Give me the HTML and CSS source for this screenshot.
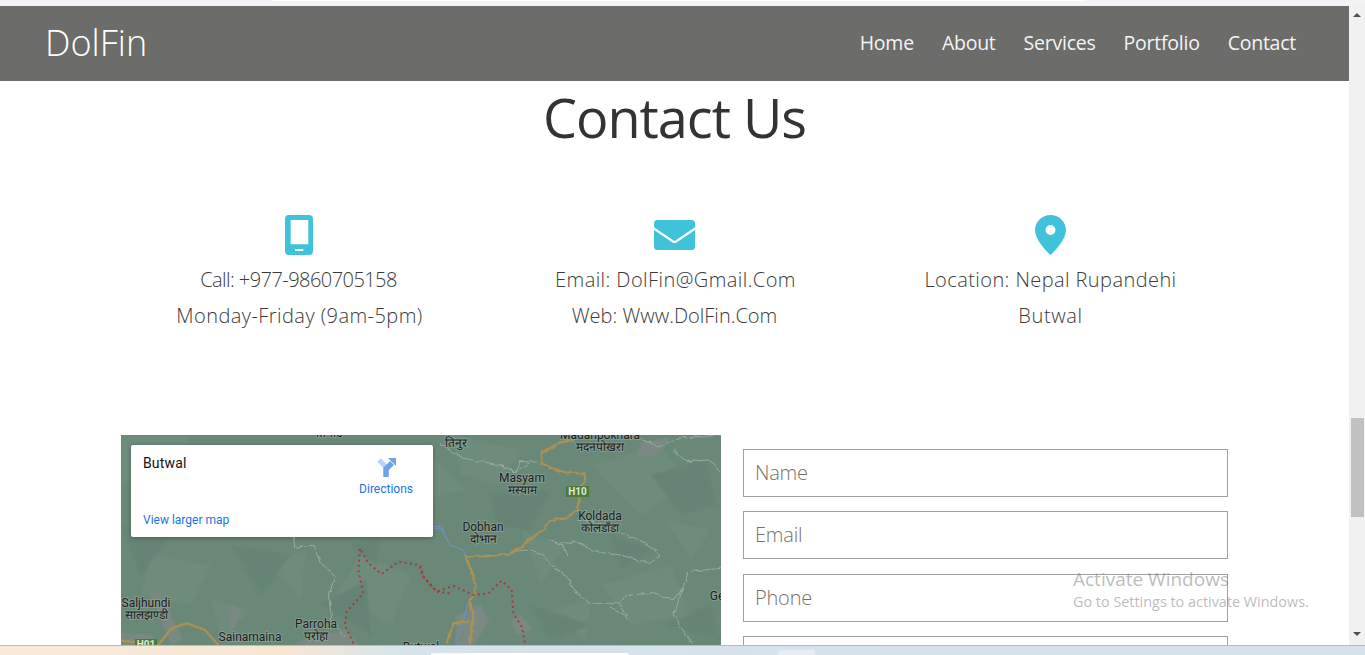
FILE: index.html
```html
<!DOCTYPE html>
<html lang="en">
<head>
<meta charset="utf-8">
<title>DolFin - Contact</title>
<link rel="stylesheet" href="styles.css">
</head>
<body>
<div class="window">
  <div class="top-strip"><div class="top-strip-tab"></div></div>
  <div class="viewport">
    <div class="page">
      <header class="navbar">
        <a class="brand">DolFin</a>
        <nav class="nav">
          <a>Home</a><a>About</a><a>Services</a><a>Portfolio</a><a>Contact</a>
        </nav>
      </header>
      <h1 class="title">Contact Us</h1>
      <section class="info">
        <div class="info-col">
          <svg class="icon icon-phone" width="28" height="40" viewBox="0 0 28 40"><path fill="#3fc2da" fill-rule="evenodd" d="M4 0h20a4 4 0 0 1 4 4v32a4 4 0 0 1-4 4H4a4 4 0 0 1-4-4V4a4 4 0 0 1 4-4zM5.700 5v24.300h17.600V5zM10 34v2h8.300v-2z"/></svg>
          <p class="tight">Call: +977-9860705158</p>
          <p class="wide">Monday-Friday (9am-5pm)</p>
        </div>
        <div class="info-col">
          <svg class="icon icon-mail" width="41" height="30" viewBox="0 0 41 30"><rect width="41" height="30" rx="3.500" fill="#3fc2da"/><path d="M-1 8 19 21.500q1.500.8 3 0L42 8" fill="none" stroke="#fff" stroke-width="2.200"/></svg>
          <p class="loose">Email: DolFin@Gmail.Com</p>
          <p>Web: Www.DolFin.Com</p>
        </div>
        <div class="info-col">
          <svg class="icon icon-pin" width="31" height="40" viewBox="0 0 31 40"><path fill="#3fc2da" fill-rule="evenodd" d="M15.500 0C6.900 0 0 6.800 0 15.200 0 24 10.500 35.500 15.500 40 20.500 35.500 31 24 31 15.200 31 6.800 24.100 0 15.500 0zm0 10a5 5 0 1 1 0 10 5 5 0 0 1 0-10z"/></svg>
          <p class="loose">Location: Nepal Rupandehi</p>
          <p class="loose-more">Butwal</p>
        </div>
      </section>
      <section class="contact">
        <div class="map">
          <svg class="map-art" width="600" height="450" viewBox="0 0 600 450">
            <defs>
              <filter id="wobble" filterUnits="userSpaceOnUse" x="-100" y="-100" width="1300" height="900">
                <feTurbulence type="fractalNoise" baseFrequency=".05" numOctaves="2" seed="4" result="noise"/>
                <feDisplacementMap in="SourceGraphic" in2="noise" scale="14" xChannelSelector="R" yChannelSelector="G"/>
                <feGaussianBlur stdDeviation=".6"/>
              </filter>
              <filter id="soft" x="-5%" y="-5%" width="110%" height="110%">
                <feGaussianBlur stdDeviation="1.200"/>
              </filter>
            </defs>
            <rect width="600" height="450" fill="#698877"/>
            <g filter="url(#soft)">
              <g fill="#6d8c7b">
                <polygon points="0,0 70,0 50,30 0,50"/>
                <polygon points="330,0 400,15 380,50 340,40"/>
                <polygon points="470,30 540,10 570,50 520,80"/>
                <polygon points="30,120 90,130 70,170 20,160"/>
                <polygon points="240,120 290,140 270,190 215,160"/>
                <polygon points="480,150 550,130 570,180 510,190"/>
                <polygon points="400,95 445,110 420,150"/>
                <polygon points="150,130 185,115 180,165"/>
                <polygon points="310,20 345,55 300,65"/>
                <polygon points="545,85 590,95 570,125"/>
                <polygon points="90,165 130,175 100,205"/>
                <polygon points="430,175 470,165 465,205"/>
              </g>
              <g fill="#658474">
                <polygon points="110,110 170,120 140,160"/>
                <polygon points="370,60 430,55 410,95 375,90"/>
                <polygon points="275,30 305,55 285,85 260,65"/>
                <polygon points="410,170 470,190 430,205"/>
                <polygon points="530,40 585,25 595,70 560,80"/>
                <polygon points="200,170 245,145 250,200"/>
                <polygon points="0,90 50,100 20,140"/>
                <polygon points="490,100 530,115 500,135"/>
                <polygon points="230,110 260,100 255,130"/>
                <polygon points="545,190 590,170 600,205"/>
              </g>
              <g fill="#7a8a83">
                <polygon points="28,155 40,160 62,205 50,210 38,180"/>
                <polygon points="110,170 120,175 108,205"/>
                <polygon points="335,180 360,170 368,185 352,212 335,212"/>
                <polygon points="390,185 400,180 412,195 395,200"/>
                <polygon points="180,205 225,195 240,212 170,212"/>
                <polygon points="520,8 550,2 535,20 515,20"/>
                <polygon points="0,198 30,200 40,212 0,212"/>
              </g>
            </g>
            <g transform="translate(299 -5) scale(.3333)" fill="none">
              <path filter="url(#wobble)" stroke="#9aaca2" stroke-width="3" d="M280 365C330 355 360 360 390 400L440 440 470 490 510 520 600 520 620 495 700 490 760 510 790 470 805 425 900 415M385 330 430 345 445 380M430 340 470 335 520 365 600 375 690 400 720 378 690 345 610 310 570 285 470 270M600 520 625 565 570 530M790 470 760 555 815 640M760 60 800 95 870 90 903 130M640 20 720 50 770 25 903 15M60 40 130 85 240 105 285 125 300 95 350 95M285 125 330 100"/>
              <path stroke="#6e8fb8" stroke-width="4" d="M0 290 60 290 90 345 130 360 135 378M145 515 125 590 105 640"/>
              <path filter="url(#wobble)" stroke="#ab9152" stroke-width="7" d="M460 30 420 38 365 68 365 100 410 120 440 128 490 130 498 150 480 170 478 210 470 240 440 265 390 270 375 295 330 330 295 355 270 370 200 378 135 378 150 410 165 450 165 490 150 510 160 570 150 640M150 575 100 580 80 640"/>
              <path stroke="#a33b3c" stroke-width="6" stroke-dasharray="6 10" d="M0 410 10 440 50 485 100 468 160 495 205 490 245 452 275 480 280 550 305 590 315 640"/>
            </g>
            <g transform="translate(-6 -5) scale(.3333)" fill="none">
              <path filter="url(#wobble)" stroke="#9aaca2" stroke-width="3" d="M535 320 540 352 600 345 615 395 660 440 640 490 650 570 690 620"/>
              <path stroke="#ab9152" stroke-width="7" d="M18 632 90 640 130 645 170 595 215 580 270 600 310 645"/>
              <path stroke="#a33b3c" stroke-width="6" stroke-dasharray="6 10" d="M715 640 690 585 695 545 745 490 730 420 735 355 760 400 800 432 850 395 915 405 925 440 965 485 1005 490"/>
              <path stroke="#6e8fb8" stroke-width="3" d="M955 295 985 295 990 320"/>
            </g>
            <rect class="shield" x="445" y="51" width="23" height="11"/>
            <text class="shield-text" x="456.500" y="60">H10</text>
            <rect class="shield" x="14" y="204" width="22" height="11"/>
            <text class="shield-text" x="25" y="213">H01</text>
            <text class="map-label" x="479" y="4">Madanpokhara</text>
            <text class="map-label" x="479" y="16">मदनपोखरा</text>
            <text class="map-label" x="401" y="47">Masyam</text>
            <text class="map-label" x="401" y="59">मस्याम</text>
            <text class="map-label" x="479" y="85">Koldada</text>
            <text class="map-label" x="479" y="97">कोलडाँडा</text>
            <text class="map-label" x="362" y="96">Dobhan</text>
            <text class="map-label" x="362" y="108">दोभान</text>
            <text class="map-label" x="25" y="172">Saljhundi</text>
            <text class="map-label" x="25" y="184">सालझण्डी</text>
            <text class="map-label" x="195" y="193">Parroha</text>
            <text class="map-label" x="195" y="205">परोहा</text>
            <text class="map-label" x="129" y="206">Sainamaina</text>
            <text class="map-label" x="300" y="216">Butwal</text>
            <text class="map-label" x="596" y="165">Ge</text>
            <text class="map-label" x="208" y="2">तिनाउ</text>
            <text class="map-label" x="335" y="12">तिनुर</text>
          </svg>
          <div class="map-card">
            <div class="map-card-top">
              <span class="place">Butwal</span>
              <a class="directions">
                <svg class="dir-icon" width="18" height="19" viewBox="0 0 18 19"><path d="M1 2 9 10" stroke="#b9d2f4" stroke-width="5" fill="none"/><path d="M8 19V11L14 5" stroke="#6ea3ea" stroke-width="5.500" fill="none"/><path d="M10 0H18V8Z" fill="#6ea3ea"/></svg>
                <span>Directions</span>
              </a>
            </div>
            <a class="larger">View larger map</a>
          </div>
        </div>
        <form class="form">
          <input class="field" type="text" placeholder="Name">
          <input class="field" type="text" placeholder="Email">
          <input class="field" type="text" placeholder="Phone">
          <input class="field" type="text">
        </form>
      </section>
      <div class="activate">
        <div class="activate-title">Activate Windows</div>
        <div class="activate-sub">Go to Settings to activate Windows.</div>
      </div>
    </div>
    <div class="scrollbar">
      <span class="arrow-up"></span>
      <span class="thumb"></span>
      <span class="arrow-down"></span>
    </div>
  </div>
  <div class="taskbar"><span class="task-search"></span><span class="task-btn"></span></div>
</div>
</body>
</html>
```
FILE: styles.css
```css
* { box-sizing: border-box; }
html, body { margin: 0; height: 100%; overflow: hidden; background: #fff; }
body { font-family: "Open Sans", "Noto Sans", sans-serif; color: #333; }
.window { height: 655px; display: flex; flex-direction: column; overflow: hidden; }
.top-strip { height: 6px; flex: none; background: #f2f3f5; padding-left: 272px; }
.top-strip-tab { width: 813px; height: 1px; background: #fff; }
.viewport { flex: 1; min-height: 0; display: flex; }
.page { flex: 1; min-width: 0; position: relative; overflow: hidden; background: #fff; }
.navbar { height: 75px; background: #6c6c6a; color: #fff; display: flex; align-items: center; justify-content: space-between; padding: 0 53px 2px 45px; }
.brand { font-size: 36px; font-weight: 300; }
.nav { display: flex; gap: 28px; font-size: 19.500px; font-weight: 400; letter-spacing: -.24px; color: #f4f4f4; }
.title { margin: 0; height: 73px; font-size: 54px; line-height: 73px; font-weight: 400; letter-spacing: -1px; text-align: center; color: #333; }
.info { display: grid; grid-template-columns: repeat(3, 375px); justify-content: center; margin-top: 61px; height: 220px; }
.info-col { display: flex; flex-direction: column; align-items: center; }
.icon { display: block; margin-bottom: 7px; }
.icon-phone { margin-right: 1px; }
.icon-pin { margin-left: 2px; }
.icon-mail { margin-top: 5px; margin-bottom: 12px; }
.info-col p { margin: 0; font-size: 20px; line-height: 36px; font-weight: 300; color: #3a3a3a; }
.info-col .tight { letter-spacing: -.55px; margin-right: 2px; }
.info-col .wide { letter-spacing: .45px; }
.info-col .loose { letter-spacing: .42px; margin-left: 2px; }
.info-col .loose-more { letter-spacing: .65px; margin-left: 2px; }
.contact { display: flex; gap: 22px; padding-left: 121px; }
.map { width: 600px; height: 450px; flex: none; position: relative; overflow: hidden; }
.map-art { display: block; }
.map-label { font: 400 12px Roboto, sans-serif; fill: #1c1c1c; text-anchor: middle; stroke: rgba(150,170,160,.6); stroke-width: 2px; paint-order: stroke; }
.shield { fill: #4d7a3b; }
.shield-text { font: 700 10px Roboto, sans-serif; fill: #dfe8d8; text-anchor: middle; }
.map-card { position: absolute; left: 10px; top: 10px; width: 302px; height: 92px; background: #fff; border-radius: 2px; box-shadow: 0 1px 4px rgba(0,0,0,.3); padding: 10px 12px; display: flex; flex-direction: column; justify-content: space-between; font-family: Roboto, sans-serif; }
.map-card-top { display: flex; justify-content: space-between; }
.place { font-size: 14px; font-weight: 400; letter-spacing: .15px; color: #111; line-height: 16px; }
.directions { display: flex; flex-direction: column; align-items: center; gap: 5px; margin: 3px 8px 0 0; font-size: 12px; line-height: 14px; color: #1a73e8; }
.dir-icon { margin-left: 2px; }
.larger { font-size: 12px; line-height: 14px; color: #1a73e8; }
.form { width: 485px; flex: none; display: flex; flex-direction: column; gap: 14.33px; padding-top: 14px; }
.field { width: 100%; height: 48px; flex: none; border: 1px solid #a0a0a0; padding: 0 11px 1px; font: 300 20px "Open Sans", sans-serif; letter-spacing: -.2px; background: #fff; outline: none; }
.field::placeholder { color: #7a7068; opacity: 1; }
.activate { position: absolute; left: 1073px; top: 561px; color: rgba(120,120,120,.5); font-family: "Open Sans", sans-serif; pointer-events: none; }
.activate-title { font-size: 19px; line-height: 24px; }
.activate-sub { font-size: 14.400px; line-height: 22px; }
.scrollbar { width: 16px; flex: none; background: #f1f1f1; display: flex; flex-direction: column; align-items: center; position: relative; }
.arrow-up { margin-top: 7px; border: 4px solid transparent; border-top: 0; border-bottom: 4px solid #505050; }
.thumb { width: 13px; height: 99px; margin-top: 401px; margin-left: 1px; background: #c1c1c1; }
.arrow-down { margin-top: 115px; border: 4px solid transparent; border-bottom: 0; border-top: 4px solid #505050; }
.taskbar { height: 10px; flex: none; position: relative; border-top: 1px solid #b4bcc4; background: linear-gradient(90deg, #f8e9d9 0, #f6e6d4 290px, #d5e5ec 400px, #d6e1ed 900px, #d6e1ed 100%); }
.task-search { position: absolute; left: 431px; top: 7px; width: 198px; height: 4px; background: #fff; border-radius: 2px; }
.task-btn { position: absolute; left: 778px; top: 4px; width: 37px; height: 8px; background: #e6ecf3; border-radius: 3px; }
```
